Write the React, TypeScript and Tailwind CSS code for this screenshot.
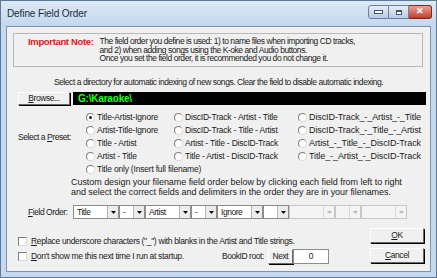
import React from 'react';

const FONT = "font-['Liberation_Sans',sans-serif]";

function Radio({ checked, label, wide }: { checked?: boolean; label: string; wide?: boolean }) {
  return (
    <div className="flex items-center h-[13px]">
      <span className="w-[9px] h-[9px] rounded-full border border-t-[#7d7d7d] border-l-[#7d7d7d] border-r-[#d8d8d8] border-b-[#d8d8d8] bg-white flex items-center justify-center shrink-0">
        {checked && <span className="w-[3px] h-[3px] rounded-full bg-[#222]" />}
      </span>
      <span className={`ml-[2px] whitespace-nowrap ${wide ? 'text-[9px] tracking-[-0.1px]' : 'text-[8.5px] tracking-[-0.2px]'}`}>{label}</span>
    </div>
  );
}

function Arrow({ disabled }: { disabled?: boolean }) {
  return (
    <svg width="5" height="3" viewBox="0 0 5 3">
      <path d="M0 0h5L2.5 3z" fill={disabled ? '#b8b8b8' : '#111'} />
    </svg>
  );
}

function Combo({ value, wide, disabled }: { value: string; wide?: boolean; disabled?: boolean }) {
  return (
    <div
      className={`h-[14px] flex items-stretch border ${disabled ? 'border-[#c6c6c6] bg-[#f4f4f4]' : 'border-[#8c8c8c] bg-white'} ${wide ? 'w-[46px]' : 'w-[26px]'}`}
    >
      <span className="flex-1 pl-[3px] leading-[12px] whitespace-nowrap overflow-hidden">{value}</span>
      <span
        className={`w-[11px] flex items-center justify-center border-l ${disabled ? 'border-[#d8d8d8] bg-[#f4f4f4]' : 'border-[#b5b5b5] bg-[#ececec]'}`}
      >
        <Arrow disabled={disabled} />
      </span>
    </div>
  );
}

function Button3D({ children, className }: { children: React.ReactNode; className: string }) {
  return (
    <div
      className={`bg-[#f0f0f0] border border-t-white border-l-white border-r-[#696969] border-b-[#696969] shadow-[1px_1px_0_#000] flex items-center justify-center ${className}`}
    >
      {children}
    </div>
  );
}

export default function App() {
  const fields: { value: string; wide: boolean; disabled?: boolean }[] = [
    { value: 'Title', wide: true },
    { value: '-', wide: false },
    { value: 'Artist', wide: true },
    { value: '-', wide: false },
    { value: 'Ignore', wide: true },
    { value: '', wide: false },
    { value: '', wide: true, disabled: true },
    { value: '', wide: false, disabled: true },
    { value: '', wide: true, disabled: true },
  ];

  return (
    <div className={`w-[437px] h-[278px] flex flex-col bg-[#c6d9ee] border border-[#5f7a99] text-[8.5px] tracking-[-0.45px] text-[#1a1a1a] ${FONT}`}>
      {/* title bar */}
      <div className="h-[25px] flex items-start justify-between bg-gradient-to-b from-[#dce9f7] to-[#c3d7ed]">
        <span className="mt-[5px] ml-[6px] text-[10px] tracking-[-0.1px] text-[#1c2b3c]">Define Field Order</span>
        <div className="flex mr-[4px] mt-[4px]">
          <div className="w-[21px] h-[14px] rounded-l-[3px] border border-[#6d809a] bg-gradient-to-b from-[#e6eef8] to-[#b8cbe3] flex items-center justify-center">
            <span className="w-[7px] h-[2px] bg-white border border-[#44566f] box-content" />
          </div>
          <div className="w-[20px] h-[14px] border-y border-r border-[#6d809a] bg-gradient-to-b from-[#e6eef8] to-[#b8cbe3] flex items-center justify-center">
            <span className="w-[6px] h-[5px] border border-[#44566f] border-t-2 bg-white" />
          </div>
          <div className="w-[23px] h-[14px] rounded-r-[3px] border-y border-r border-[#7a2a22] bg-gradient-to-b from-[#e8a093] to-[#c2392b] flex items-center justify-center text-white text-[9px] font-bold tracking-normal">
            ✕
          </div>
        </div>
      </div>

      {/* client area */}
      <div className="flex-1 mx-[5px] mb-[5px] bg-[#f0f0f0] border border-[#7d93ad] flex flex-col">
        {/* note */}
        <div className="mt-[6px] ml-[6px] mr-[7px] h-[34px] border border-[#b7b7b7] flex pt-[3px]">
          <span className="ml-[14px] text-[#d9201c] font-bold text-[9.5px] leading-[10px] whitespace-nowrap tracking-[-0.35px]">
            Important Note:
          </span>
          <div className="ml-[6px] leading-[8.5px] whitespace-nowrap">
            <div>The field order you define is used: 1) to name files when importing CD tracks,</div>
            <div>and 2) when adding songs using the K-oke and Audio buttons.</div>
            <div>Once you set the field order, it is recommended you do not change it.</div>
          </div>
        </div>

        {/* directory */}
        <div className="mt-[10px] h-[10px] leading-[10px] text-center whitespace-nowrap">
          Select a directory for automatic indexing of new songs. Clear the field to disable automatic indexing.
        </div>
        <div className="mt-[5px] ml-[11px] flex h-[13px]">
          <Button3D className="w-[52px] h-[13px]">
            <span>
              <span className="underline">B</span>rowse...
            </span>
          </Button3D>
          <div className="ml-[3px] w-[353px] h-[13px] bg-black pl-[5px] text-[#1dff1d] font-bold text-[10px] tracking-[-0.2px] leading-[13px]">
            G:\Karaoke\
          </div>
        </div>

        {/* presets */}
        <div className="mt-[6px] ml-[11px] flex">
          <div className="w-[68px] flex items-center h-[52px]">
            <span className="whitespace-nowrap">
              Select a <span className="underline">P</span>reset:
            </span>
          </div>
          <div className="flex flex-col w-[88px]">
            <Radio checked label="Title-Artist-Ignore" />
            <Radio label="Artist-Title-Ignore" />
            <Radio label="Title - Artist" />
            <Radio label="Artist - Title" />
            <Radio label="Title only (Insert full filename)" />
          </div>
          <div className="flex flex-col w-[124px]">
            <Radio label="DiscID-Track - Artist - Title" />
            <Radio label="DiscID-Track - Title - Artist" />
            <Radio label="Artist - Title - DiscID-Track" />
            <Radio label="Title - Artist - DiscID-Track" />
          </div>
          <div className="flex flex-col">
            <Radio wide label="DiscID-Track_-_Artist_-_Title" />
            <Radio wide label="DiscID-Track_-_Title_-_Artist" />
            <Radio wide label="Artist_-_Title_-_DiscID-Track" />
            <Radio wide label="Title_-_Artist_-_DiscID-Track" />
          </div>
        </div>

        <div className="mt-[1px] ml-[64px] leading-[10px] whitespace-nowrap text-[9px] tracking-[-0.05px]">
          <div>Custom design your filename field order below by clicking each field from left to right</div>
          <div>and select the correct fields and delimiters in the order they are in your filenames.</div>
        </div>

        {/* field order */}
        <div className="mt-[8px] flex items-center h-[14px]">
          <span className="ml-[21px] w-[45px] whitespace-nowrap">
            <span className="underline">F</span>ield Order:
          </span>
          {fields.map((f, i) => (
            <Combo key={i} value={f.value} wide={f.wide} disabled={f.disabled} />
          ))}
        </div>

        {/* bottom */}
        <div className="mt-[9px] flex">
          <div className="flex flex-col pt-[6px] ml-[11px]">
            <div className="flex items-center h-[14px]">
              <span className="w-[9px] h-[9px] border border-t-[#7d7d7d] border-l-[#7d7d7d] border-r-[#d8d8d8] border-b-[#d8d8d8] bg-white" />
              <span className="ml-[4px] whitespace-nowrap tracking-[-0.33px]">
                <span className="underline">R</span>eplace underscore characters ("_") with blanks in the Artist and Title strings.
              </span>
            </div>
            <div className="flex items-center h-[16px]">
              <span className="w-[9px] h-[9px] border border-t-[#7d7d7d] border-l-[#7d7d7d] border-r-[#d8d8d8] border-b-[#d8d8d8] bg-white" />
              <span className="ml-[4px] w-[186px] whitespace-nowrap tracking-[-0.33px]">
                <span className="underline">D</span>on't show me this next time I run at startup.
              </span>
              <span className="ml-[5px] whitespace-nowrap">BookID root:</span>
              <Button3D className="ml-[4px] w-[25px] h-[15px]">Next</Button3D>
              <div className="w-[36px] h-[15px] bg-white border border-[#8c8c8c] flex items-center justify-center">0</div>
            </div>
          </div>
          <div className="ml-auto mr-[6px] flex flex-col gap-[5px]">
            <Button3D className="w-[54px] h-[15px]">
              <span>
                <span className="underline">O</span>K
              </span>
            </Button3D>
            <Button3D className="w-[54px] h-[15px]">
              <span>
                <span className="underline">C</span>ancel
              </span>
            </Button3D>
          </div>
        </div>
      </div>
    </div>
  );
}
